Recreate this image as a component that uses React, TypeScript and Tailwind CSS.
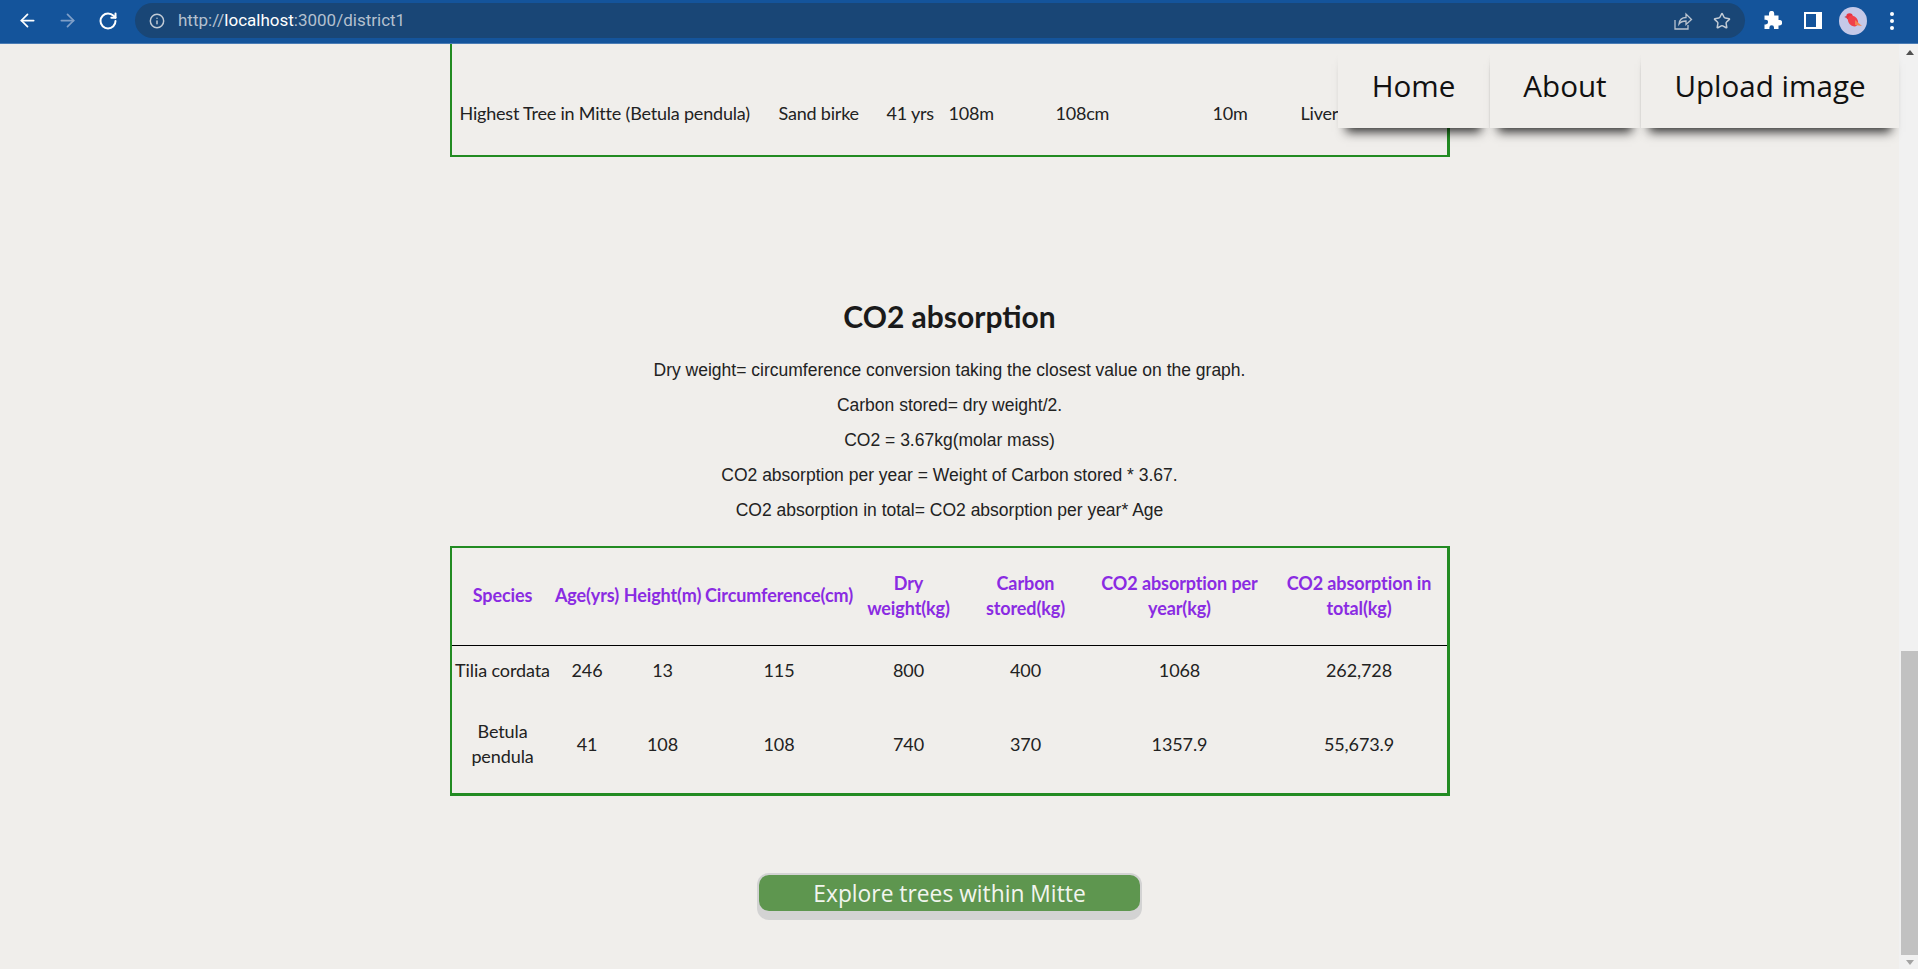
import React from 'react';
import { ArrowLeft, ArrowRight, RotateCw, Info, Star } from 'lucide-react';

const headers = [
  'Species',
  'Age(yrs)',
  'Height(m)',
  'Circumference(cm)',
  'Dry weight(kg)',
  'Carbon stored(kg)',
  'CO2 absorption per year(kg)',
  'CO2 absorption in total(kg)',
];

const rows = [
  ['Tilia cordata', '246', '13', '115', '800', '400', '1068', '262,728'],
  ['Betula pendula', '41', '108', '108', '740', '370', '1357.9', '55,673.9'],
];

const formulas = [
  'Dry weight= circumference conversion taking the closest value on the graph.',
  'Carbon stored= dry weight/2.',
  'CO2 = 3.67kg(molar mass)',
  'CO2 absorption per year = Weight of Carbon stored * 3.67.',
  'CO2 absorption in total= CO2 absorption per year* Age',
];

const BrowserBar = () => (
  <div className="h-[44px] shrink-0 flex items-center pb-[2px] bg-[#14549b] border-b border-[#4a7cb5] text-white">
    <ArrowLeft className="w-[21px] h-[21px] ml-[17px]" strokeWidth={2} />
    <ArrowRight className="w-[21px] h-[21px] ml-[19px] text-[#7f9fc8]" strokeWidth={2} />
    <RotateCw className="w-[20px] h-[20px] ml-[20px]" strokeWidth={2.4} />
    <div className="ml-[17px] w-[1610px] h-[35px] rounded-full bg-[#194676] flex items-center">
      <Info className="w-[16px] h-[16px] ml-[14px] text-[#c3ccd6]" strokeWidth={2.2} />
      <span className="ml-[13px] text-[17px] text-[#b4c0cf] font-['Roboto',sans-serif]">
        http://<span className="text-white">localhost</span>:3000/district1
      </span>
      <div className="ml-auto flex items-center">
        <svg viewBox="0 0 20 20" className="w-[20px] h-[20px] text-[#b9c3cf]" fill="none" stroke="currentColor" strokeWidth="1.3">
          <path d="M2 9v9h13v-4" />
          <path d="M6 13c.5-4 3-6.500 7-6.500V3l5.500 5.500L13 13.500V10c-3 0-5.500 1-7 3z" />
        </svg>
        <Star className="w-[18px] h-[18px] ml-[20px] mr-[14px] text-[#c3ccd6]" strokeWidth={2} />
      </div>
    </div>
    <svg viewBox="0 0 20 20" className="w-[20px] h-[20px] ml-[17px]" fill="currentColor">
      <path d="M7 2.500a2.600 2.600 0 0 1 5.200 0V4.500H16.500V9h1a2.700 2.700 0 0 1 0 5.400h-1V18H12v-1.500a2.300 2.300 0 0 0-4.600 0V18H2.500v-4.500h1.200a2.400 2.400 0 0 0 0-4.800H2.500V4.500H7z" />
    </svg>
    <div className="ml-[22px] w-[18px] h-[17px] border-y-2 border-l-2 border-r-[6px] border-white" />
    <svg viewBox="0 0 28 28" className="w-[28px] h-[28px] ml-[17px]">
      <circle cx="14" cy="14" r="14" fill="#c5c9e8" />
      <circle cx="10.500" cy="9.500" r="3.200" fill="#e8323f" />
      <ellipse cx="14" cy="14" rx="4.500" ry="6" transform="rotate(-40 14 14)" fill="#f0414a" />
      <path d="M16 13l7 6-7-1z" fill="#f4844f" />
      <path d="M7.500 9l-2.200 1 2.500 1z" fill="#b8303a" />
    </svg>
    <div className="ml-[23px] flex flex-col gap-[3px]">
      <span className="w-[4px] h-[4px] rounded-full bg-white" />
      <span className="w-[4px] h-[4px] rounded-full bg-white" />
      <span className="w-[4px] h-[4px] rounded-full bg-white" />
    </div>
  </div>
);

const NavCard = ({ label, width }: { label: string; width: string }) => (
  <div
    className={`${width} h-[84px] flex items-center justify-center bg-[#f0eeeb] text-[29.6px] text-[#111] font-['Open_Sans',sans-serif] shadow-[0_12px_10px_-8px_rgba(0,0,0,0.8)]`}
  >
    {label}
  </div>
);

const Scrollbar = () => (
  <div className="w-[19px] shrink-0 bg-[#f1f1f1] flex flex-col items-end">
    <div className="w-[17px] h-[17px] flex items-center justify-center">
      <div className="w-0 h-0 border-x-[4px] border-x-transparent border-b-[5px] border-b-[#505050]" />
    </div>
    <div className="mt-auto w-[17px] h-[304px] bg-[#c1c1c1]" />
    <div className="w-[17px] h-[14px] flex items-center justify-center">
      <div className="w-0 h-0 border-x-[4px] border-x-transparent border-t-[5px] border-t-[#a3a3a3]" />
    </div>
  </div>
);

export default function App() {
  return (
    <div className="h-[969px] w-[1918px] flex flex-col overflow-hidden bg-[#f0eeeb]">
      <BrowserBar />
      <div className="flex-1 flex min-h-0 relative">
        <div className="flex-1 flex flex-col items-center font-['Lato',sans-serif] text-[18px] text-[#222]">
          {/* top table, scrolled past its header */}
          <div className="w-[1000px] h-[113px] border-l-2 border-r-[3px] border-b-2 border-[#228b22] flex items-end pb-[28px] tracking-[-0.2px]">
            <span className="ml-[8px] w-[319px]">Highest Tree in Mitte (Betula pendula)</span>
            <span className="w-[108px]">Sand birke</span>
            <span className="w-[62px]">41 yrs</span>
            <span className="w-[107px]">108m</span>
            <span className="w-[157px]">108cm</span>
            <span className="w-[88px]">10m</span>
            <span>Liver</span>
          </div>

          <h2 className="mt-[141px] text-[30px] leading-[36px] font-bold text-[#1a1a1a]">CO2 absorption</h2>
          <div className="mt-[19px] flex flex-col items-center font-['Liberation_Sans',sans-serif] text-[17.5px] leading-[35px]">
            {formulas.map((line) => (
              <p key={line}>{line}</p>
            ))}
          </div>

          <table className="mt-[18px] w-[1000px] table-fixed border-t-2 border-l-2 border-r-[3px] border-b-[3px] border-[#228b22] border-separate border-spacing-0 tracking-[-0.1px]">
            <colgroup>
              <col className="w-[102px]" />
              <col className="w-[67px]" />
              <col className="w-[84px]" />
              <col className="w-[149px]" />
              <col className="w-[110px]" />
              <col className="w-[124px]" />
              <col className="w-[184px]" />
              <col className="w-[175px]" />
            </colgroup>
            <thead>
              <tr>
                {headers.map((h) => (
                  <th
                    key={h}
                    className="h-[98px] pb-[2px] border-b border-black font-bold text-[#8a2be2] leading-[25px] text-center whitespace-normal"
                  >
                    {h}
                  </th>
                ))}
              </tr>
            </thead>
            <tbody>
              {rows.map((row, i) => (
                <tr key={row[0]} className={i === 0 ? 'h-[49px]' : 'h-[98px]'}>
                  {row.map((cell, j) => (
                    <td key={j} className={`text-center leading-[25px] ${j === 0 ? 'px-[2px]' : ''}`}>
                      {cell}
                    </td>
                  ))}
                </tr>
              ))}
            </tbody>
          </table>

          <button className="mt-[77px] w-[385px] h-[47px] rounded-[12px] bg-[#d3d3d3] p-[2px] pb-[9px]">
            <span className="block h-full rounded-[10px] bg-[#5e964f] text-[#f2f5ee] text-[22.8px] leading-[37px] font-['Open_Sans',sans-serif]">
              Explore trees within Mitte
            </span>
          </button>
        </div>
        <Scrollbar />
        <nav className="absolute top-0 right-[19px] flex gap-[1px]">
          <NavCard label="Home" width="w-[151px]" />
          <NavCard label="About" width="w-[150px]" />
          <NavCard label="Upload image" width="w-[258px]" />
        </nav>
      </div>
    </div>
  );
}
